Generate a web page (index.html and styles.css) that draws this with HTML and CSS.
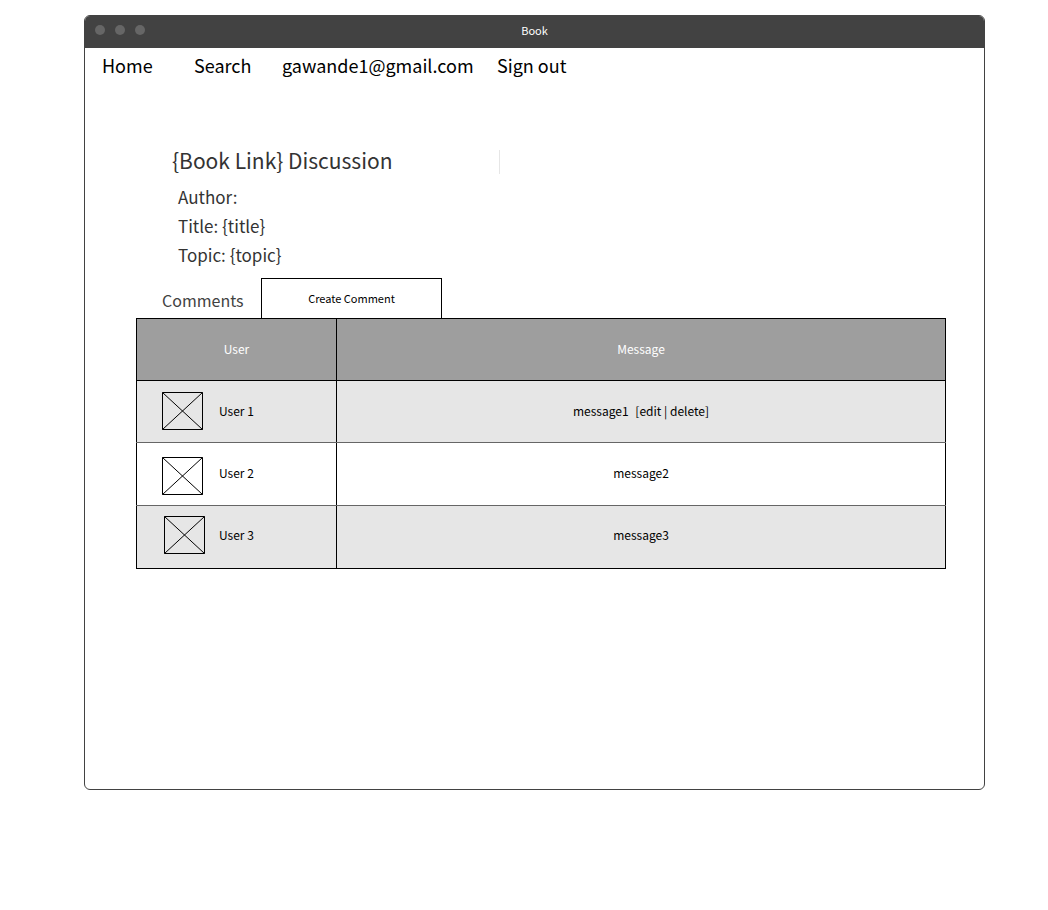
FILE: index.html
```html
<!DOCTYPE html>
<html lang="en">
<head>
<meta charset="utf-8">
<title>Book</title>
<link rel="stylesheet" href="styles.css">
</head>
<body>
<div class="window">
  <header class="titlebar">
    <div class="dots"><span class="dot"></span><span class="dot"></span><span class="dot"></span></div>
    <span class="window-title">Book</span>
  </header>
  <nav class="nav">
    <a href="#">Home</a>
    <a href="#">Search</a>
    <a href="#">gawande1@gmail.com</a>
    <a href="#">Sign out</a>
  </nav>
  <main class="content">
    <div class="heading">
      <h1 class="title">{Book Link} Discussion</h1>
      <span class="divider"></span>
    </div>
    <div class="details">
      <p>Author:</p>
      <p>Title: {title}</p>
      <p>Topic: {topic}</p>
    </div>
    <div class="toolbar">
      <h2 class="subtitle">Comments</h2>
      <button class="create" type="button">Create Comment</button>
    </div>
    <table class="comments">
      <colgroup><col class="col-user"><col></colgroup>
      <thead>
        <tr><th>User</th><th>Message</th></tr>
      </thead>
      <tbody>
        <tr>
          <td><div class="user"><svg class="avatar" viewBox="0 0 41 38"><path d="M.5.5h40v37H.5zM.5.5l40 37M40.5.5l-40 37"/></svg><span>User 1</span></div></td>
          <td>message1 <span class="actions">[<a href="#">edit</a> | <a href="#">delete</a>]</span></td>
        </tr>
        <tr>
          <td><div class="user user-low"><svg class="avatar" viewBox="0 0 41 38"><path d="M.5.5h40v37H.5zM.5.5l40 37M40.5.5l-40 37"/></svg><span>User 2</span></div></td>
          <td>message2</td>
        </tr>
        <tr>
          <td><div class="user user-high"><svg class="avatar" viewBox="0 0 41 38"><path d="M.5.5h40v37H.5zM.5.5l40 37M40.5.5l-40 37"/></svg><span>User 3</span></div></td>
          <td>message3</td>
        </tr>
      </tbody>
    </table>
  </main>
</div>
</body>
</html>
```
FILE: styles.css
```css
* { box-sizing: border-box; }

body {
  margin: 0;
  padding: 15px 63px 120px 84px;
  min-height: 100vh;
  display: flex;
  background: #fff;
  color: #000;
  font-family: "Noto Sans CJK SC", "Noto Sans", sans-serif;
}

a { color: inherit; text-decoration: none; }
h1, h2, p { margin: 0; font-weight: 400; }

.window {
  flex: 1;
  border: 1px solid #424242;
  border-radius: 6px;
  overflow: hidden;
}

.titlebar {
  display: grid;
  grid-template-columns: 1fr auto 1fr;
  align-items: center;
  height: 32px;
  padding: 0 10px 4px;
  background: #424242;
  color: #fff;
  font-size: 11px;
  line-height: 16px;
}

.dots { display: flex; gap: 10px; }
.dot { width: 10px; height: 10px; border-radius: 50%; background: #666; }

.nav {
  display: grid;
  grid-template-columns: 92px 88px 215px auto;
  padding: 3px 17px 5px;
  font-size: 18px;
  line-height: 28px;
}

.content { padding: 60px 38px 24px 51px; }

.heading {
  display: flex;
  align-items: center;
  padding-left: 36px;
  color: #333;
}

.title { width: 327px; font-size: 21px; line-height: 32px; }
.divider { width: 1px; height: 24px; margin-top: 4px; background: #e6e6e6; }

.details {
  padding: 6px 0 9px 42px;
  color: #333;
  font-size: 17px;
  line-height: 29px;
}

.toolbar { display: flex; align-items: center; }

.subtitle {
  width: 125px;
  padding: 4px 0 0 26px;
  color: #424242;
  font-size: 16px;
  line-height: 24px;
}

.create {
  width: 181px;
  height: 40px;
  padding-bottom: 2px;
  border: 1px solid #000;
  border-bottom: 0;
  background: #fff;
  color: #000;
  font: 11px/16px "Noto Sans CJK SC", "Noto Sans", sans-serif;
}

.comments {
  width: 100%;
  table-layout: fixed;
  border-collapse: collapse;
  border: 1px solid #000;
  font-size: 12px;
  line-height: 18px;
  text-align: center;
}

.col-user { width: 200px; }
.comments th, .comments td { height: 62px; padding: 0 0 2px; border: 1px solid #000; }
.comments th { background: #9e9e9e; color: #fff; font-weight: 400; }
.comments td { height: 63px; border-bottom-color: #666; }
.comments tbody tr:first-child td { height: 62px; }
.comments tbody tr:nth-child(odd) { background: #e6e6e6; }
.comments tbody tr:last-child td { padding-bottom: 4px; border-bottom-color: #000; }

.user { display: flex; align-items: center; gap: 16px; padding-left: 25px; }
.avatar { width: 41px; height: 38px; fill: none; stroke: #000; }
.user-low .avatar { margin-top: 5px; }
.user-high { gap: 14px; padding-left: 27px; }
.actions { margin-left: 4px; }
```
